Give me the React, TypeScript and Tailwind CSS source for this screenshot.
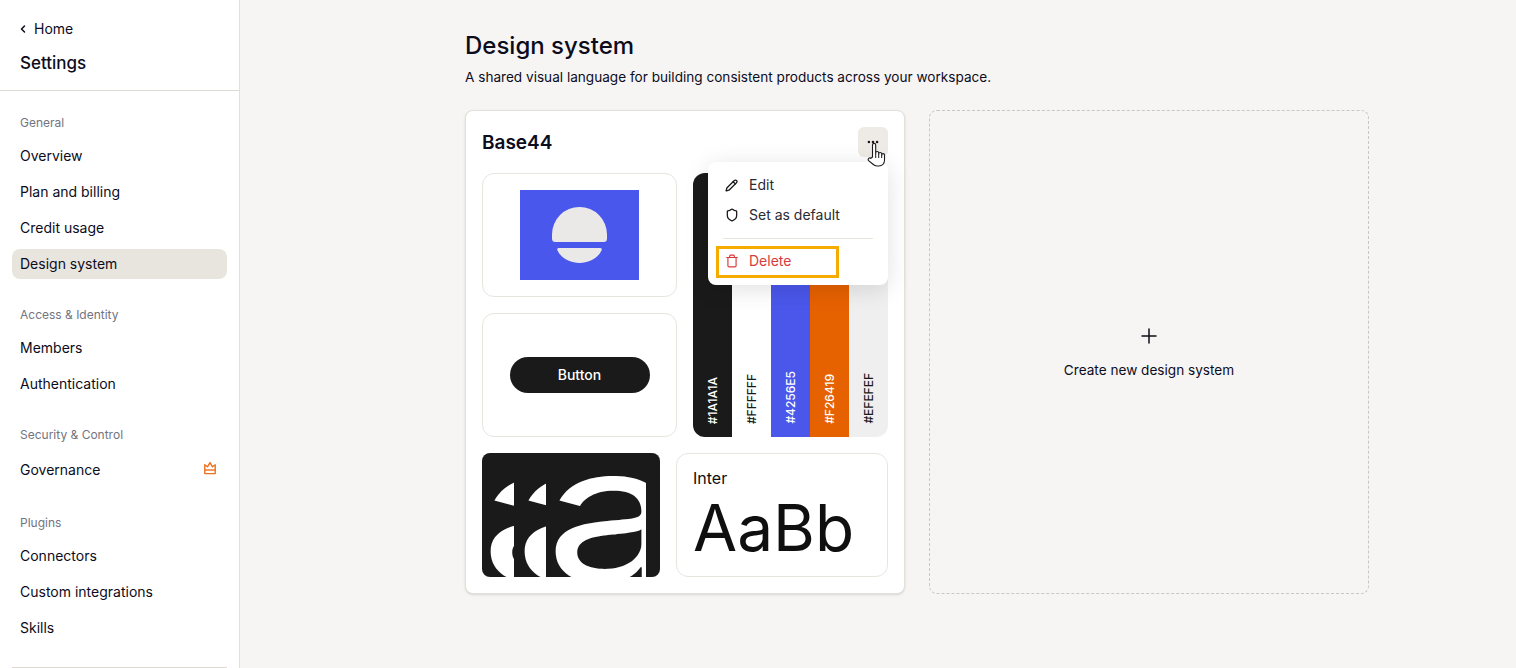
import { ChevronLeft, Ellipsis, Pencil, Plus, Shield, Trash } from "lucide-react";

const sections = [
  { label: "General", items: ["Overview", "Plan and billing", "Credit usage", "Design system"] },
  { label: "Access & Identity", items: ["Members", "Authentication"] },
  { label: "Security & Control", items: ["Governance"] },
  { label: "Plugins", items: ["Connectors", "Custom integrations", "Skills"] },
];

const swatches = [
  { hex: "#1A1A1A", bg: "bg-[#1a1a1a]", text: "text-white" },
  { hex: "#FFFFFF", bg: "bg-white", text: "text-[#1a1a1a]" },
  { hex: "#4256E5", bg: "bg-[#4a57ea]", text: "text-white" },
  { hex: "#F26419", bg: "bg-[#e66100]", text: "text-white" },
  { hex: "#EFEFEF", bg: "bg-[#efefef]", text: "text-[#1a1a1a]" },
];

const CrownIcon = () => (
  <svg width="14" height="14" viewBox="0 0 14 14" fill="none" stroke="#ee6f1c" strokeWidth="1.4" strokeLinejoin="round" className="mr-[2px] -mt-[4px]">
    <path d="M1.800 3.800 4.500 5.800 7 1.600 9.500 5.800 12.200 3.800V12.600H1.800Z" />
    <path d="M1.800 9H12.200" />
  </svg>
);

const HandCursor = () => (
  <svg width="20" height="26" viewBox="0 0 20 26" className="absolute left-[867px] top-[142px] z-20">
    <path
      d="M5.500 15V3a1.600 1.600 0 0 1 3.200 0v8a1.500 1.500 0 0 1 3 0v1a1.500 1.500 0 0 1 3 0v1a1.400 1.400 0 0 1 2.800 0v5c0 3.600-2.400 6-5.600 6h-1.800c-2 0-3.200-.8-4.400-2L1.600 18.600a1.600 1.600 0 0 1 2.300-2.200Z"
      fill="white"
      stroke="#1a1a1a"
      strokeWidth="1.100"
      strokeLinejoin="round"
    />
    <path d="M8.700 11v5M11.700 12v4M14.700 13v3" stroke="#1a1a1a" strokeWidth="1" />
  </svg>
);

const Sidebar = () => (
  <aside className="w-[240px] shrink-0 bg-white border-r border-[#e3e0d9] flex flex-col h-screen overflow-hidden">
    <div className="h-[91px] shrink-0 border-b border-[#dcdad3] px-5 pt-[19px]">
      <div className="flex items-center gap-[5px] h-5 text-sm text-[#0c0c1d]">
        <ChevronLeft size={12} strokeWidth={3} className="-ml-[3px]" />
        <span>Home</span>
      </div>
      <div className="mt-3 text-[17px] leading-[24px] font-medium text-[#0c0c1d]">Settings</div>
    </div>
    <nav className="px-3 pt-6 flex flex-col gap-7 shrink-0">
      {sections.map((section) => (
        <div key={section.label}>
          <div className="px-2 h-4 mb-[10px] text-xs leading-4 text-[#72747f]">{section.label}</div>
          <div className="flex flex-col gap-[6px]">
            {section.items.map((item) => {
              const active = item === "Design system";
              const gov = item === "Governance";
              return (
                <div
                  key={item}
                  className={`px-2 flex items-center justify-between rounded-lg text-sm text-[#0c0c1d] ${gov ? "h-[34px]" : "h-[30px]"} ${active ? "bg-[#e8e5df]" : ""}`}
                >
                  <span>{item}</span>
                  {gov && <CrownIcon />}
                </div>
              );
            })}
          </div>
        </div>
      ))}
    </nav>
    <div className="mx-3 mt-6 border-t border-[#dcdad3]" />
  </aside>
);

const BaseCard = () => (
  <div className="w-[440px] h-[484px] bg-white border border-[#e3e0d9] rounded-lg shadow-sm p-4">
    <div className="h-[46px] flex items-start justify-between">
      <h2 className="pt-1 text-[19px] leading-6 font-semibold text-[#0c0c1d]">Base44</h2>
      <div className="w-[30px] h-[30px] bg-[#eeebe6] rounded-md flex items-center justify-center text-[#1a1a1a]">
        <Ellipsis size={14} strokeWidth={2.4} />
      </div>
    </div>
    <div className="flex flex-col gap-4">
      <div className="h-[264px] grid grid-cols-2 gap-4">
        <div className="grid grid-rows-2 gap-4">
          <div className="border border-[#e8e5df] rounded-xl flex items-center justify-center">
            <svg width="119" height="90" viewBox="0 0 119 90">
              <rect width="119" height="90" fill="#4a57ed" />
              <path d="M32 44.500a27.500 27.500 0 0 1 55 0v4q0 3.500-3.500 3.500H35.500q-3.500 0-3.500-3.500Z" fill="#ebe9e8" />
              <path d="M39 58H80q2.500 0 1.500 2.500C78 68 69 73 59.500 73S41 68 37.500 60.500Q36.500 58 39 58Z" fill="#ebe9e8" />
            </svg>
          </div>
          <div className="border border-[#e8e5df] rounded-xl flex items-center justify-center">
            <div className="w-[140px] h-9 rounded-full bg-[#1a1a1a] text-white text-sm font-medium flex items-center justify-center">
              Button
            </div>
          </div>
        </div>
        <div className="flex rounded-xl overflow-hidden">
          {swatches.map((s) => (
            <div key={s.hex} className={`flex-1 flex justify-center items-end pb-[13px] ${s.bg}`}>
              <span className={`[writing-mode:vertical-rl] rotate-180 text-xs font-medium ${s.text}`}>
                {s.hex}
              </span>
            </div>
          ))}
        </div>
      </div>
      <div className="h-[124px] flex gap-4">
        <div className="w-[178px] shrink-0 bg-[#1a1a1a] rounded-lg overflow-hidden flex text-white text-[190px] leading-[118px]">
          <div className="flex -ml-[2px]">
            <span className="w-[34px] shrink-0 overflow-hidden">
              <span className="block origin-left scale-x-[1.28]">a</span>
            </span>
            <span className="w-8 shrink-0 overflow-hidden">
              <span className="block origin-left scale-x-[1.28]">a</span>
            </span>
            <span className="-ml-[1.5px] w-[101px] shrink-0 overflow-hidden">
              <span className="block origin-left scale-x-[1.28]">a</span>
            </span>
          </div>
        </div>
        <div className="flex-1 border border-[#e8e5df] rounded-xl px-4 pt-3 text-[#0f0f0f]">
          <div className="text-base leading-6">Inter</div>
          <div className="text-[64px] leading-[76px]">AaBb</div>
        </div>
      </div>
    </div>
  </div>
);

const Menu = () => (
  <div className="absolute left-[708px] top-[162px] z-10 w-[180px] h-[123px] bg-white rounded-lg shadow-[0_4px_24px_rgba(0,0,0,0.12)] px-[15px] pt-2 text-sm">
    <div className="h-[30px] flex items-center gap-[11px] px-[2px] text-[#2a2a33]">
      <Pencil size={13} strokeWidth={2.4} className="text-[#1a1a1a]" />
      <span>Edit</span>
    </div>
    <div className="h-[30px] flex items-center gap-[10px] px-[2px] text-[#2a2a33]">
      <Shield size={14} strokeWidth={2.2} className="text-[#1a1a1a]" />
      <span>Set as default</span>
    </div>
    <div className="mt-2 border-t border-[#e8e5df]" />
    <div className="mt-[7px] h-[30px] flex items-center gap-[10px] px-[2px] text-[#d93a3a]">
      <Trash size={14} strokeWidth={2} />
      <span>Delete</span>
    </div>
  </div>
);

export default function App() {
  return (
    <div className="relative flex h-screen overflow-hidden bg-[#f6f5f3] text-[#0c0c1d] [font-family:Inter,sans-serif]">
      <Sidebar />
      <main className="flex-1 pl-[225px] pt-[30px]">
        <h1 className="text-2xl leading-8 font-medium">Design system</h1>
        <p className="mt-[5px] text-[13.6px] leading-5">A shared visual language for building consistent products across your workspace.</p>
        <div className="mt-[23px] flex gap-6">
          <BaseCard />
          <div className="w-[440px] h-[484px] border border-dashed border-[#c9c7c1] rounded-lg flex flex-col items-center justify-center gap-3">
            <Plus size={24} strokeWidth={1.5} />
            <span className="text-[13.6px] leading-5">Create new design system</span>
          </div>
        </div>
      </main>
      <Menu />
      <div className="absolute left-[716px] top-[246px] z-10 w-[123px] h-[32px] border-[3px] border-[#f5ab00]" />
      <HandCursor />
    </div>
  );
}
